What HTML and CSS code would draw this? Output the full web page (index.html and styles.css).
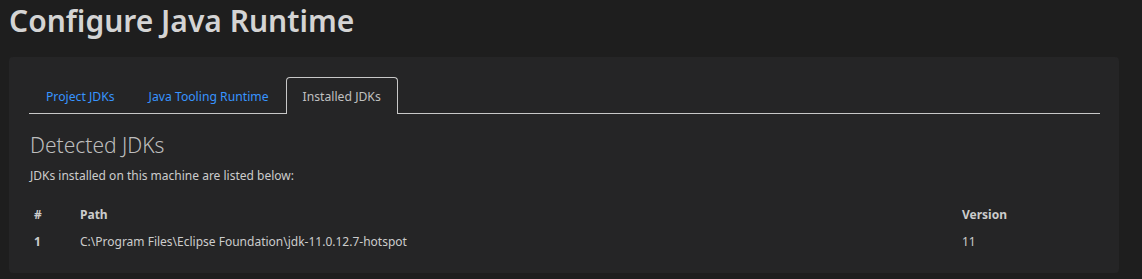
FILE: index.html
```html
<!DOCTYPE html>
<html lang="en">
<head>
<meta charset="utf-8">
<title>Configure Java Runtime</title>
<link rel="stylesheet" href="styles.css">
</head>
<body>
<h1 class="title">Configure Java Runtime</h1>
<div class="card">
  <ul class="tabs">
    <li class="tab">Project JDKs</li>
    <li class="tab">Java Tooling Runtime</li>
    <li class="tab active">Installed JDKs</li>
  </ul>
  <div class="pane">
    <h2 class="heading">Detected JDKs</h2>
    <p class="desc">JDKs installed on this machine are listed below:</p>
    <table class="jdks">
      <thead>
        <tr><th class="c-num">#</th><th class="c-path">Path</th><th class="c-ver">Version</th></tr>
      </thead>
      <tbody>
        <tr><td class="c-num">1</td><td class="c-path">C:\Program Files\Eclipse Foundation\jdk-11.0.12.7-hotspot</td><td class="c-ver">11</td></tr>
      </tbody>
    </table>
  </div>
</div>
</body>
</html>
```
FILE: styles.css
```css
html, body {
  margin: 0;
  padding: 0;
  background: #1e1e1e;
}
body {
  font-family: "Noto Sans", "Open Sans", sans-serif;
  color: #cccccc;
  padding: 0 23px 0 9px;
}
.title {
  margin: 0;
  font-size: 30px;
  font-weight: 600;
  line-height: 41px;
  color: #d4d4d4;
  height: 57px;
}
.card {
  background: #252526;
  border-radius: 4px;
  padding: 20px 19px 0 20px;
  height: 216px;
  box-sizing: border-box;
}
.tabs {
  list-style: none;
  margin: 0;
  padding: 0;
  display: flex;
  border-bottom: 1px solid #c8c8c8;
}
.tab {
  font-size: 12.2px;
  color: #3794ff;
  padding: 0 16px;
  height: 35px;
  line-height: 37px;
  border: 1px solid transparent;
  border-bottom: none;
  border-radius: 4px 4px 0 0;
  margin-bottom: -1px;
}
.tab.active {
  color: #c0c0c0;
  border-color: #c8c8c8;
  background: #252526;
  height: 36px;
}
.pane {
  padding-left: 1px;
}
.heading {
  margin: 0;
  padding-top: 17px;
  font-size: 21px;
  font-weight: 300;
  line-height: 28px;
  color: #bdbdbd;
}
.desc {
  margin: 0;
  padding-top: 9px;
  font-size: 12px;
  line-height: 16px;
  color: #cccccc;
}
.jdks {
  border-collapse: collapse;
  width: 100%;
  margin-top: 17px;
  font-size: 12px;
}
.jdks th, .jdks td {
  text-align: left;
  padding: 0;
  height: 27px;
  color: #cccccc;
}
.jdks th {
  font-weight: 700;
}
.c-num {
  width: 46px;
  padding-left: 4px !important;
  font-weight: 700;
}
.c-ver {
  width: 138px;
}
```
